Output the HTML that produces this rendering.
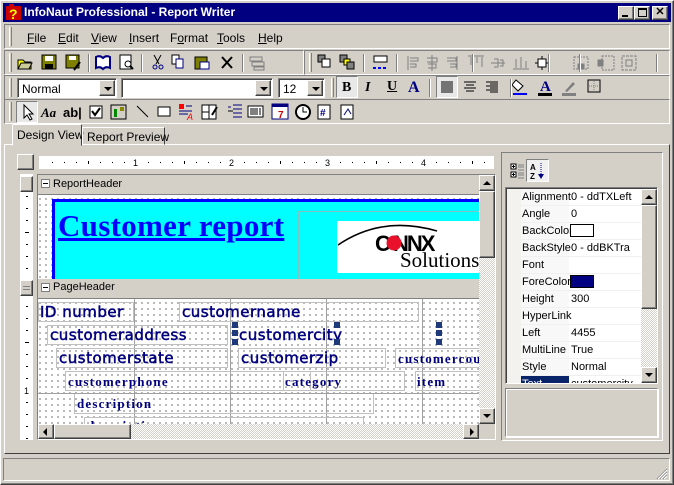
<!DOCTYPE html>
<html><head><meta charset="utf-8"><style>
*{box-sizing:border-box;margin:0;padding:0}
body{width:674px;height:485px;background:#d4d0c8;font-family:"Liberation Sans",sans-serif;font-size:11px;position:relative;overflow:hidden}
.a{position:absolute;white-space:nowrap}
.out{border:1px solid;border-color:#fff #404040 #404040 #fff;box-shadow:inset -1px -1px #808080}
.in{border:1px solid;border-color:#808080 #fff #fff #808080;box-shadow:inset 1px 1px #404040}
.etch{border:1px solid;border-color:#808080 #fff #fff #808080}
.grip{position:absolute;width:3px;border-left:1px solid #fff;border-right:1px solid #808080}
.sep{position:absolute;width:2px;border-left:1px solid #808080;border-right:1px solid #fff}
.mi{position:absolute;top:31px;font-size:12px}
.mi u{text-decoration:underline}
.combo{position:absolute;background:#fff;height:20px}
.cb{position:absolute;right:1px;top:1px;width:16px;height:16px;background:#d4d0c8}
.cb:after{content:"";position:absolute;left:4px;top:6px;border:4px solid transparent;border-top:4px solid #000;border-bottom:0}
.dots{background-color:#fff;background-image:radial-gradient(circle,#000 0.6px,transparent 0.8px);background-size:6px 6px;background-position:-1px 1px}
.fld{position:absolute;border:1px solid #c0c0c0;color:#00007f;white-space:nowrap;overflow:hidden}
.sa{font-family:"DejaVu Sans",sans-serif;font-size:15px;letter-spacing:0.5px;-webkit-text-stroke:0.5px #00007f}
.se{font-family:"Liberation Serif",serif;font-weight:bold;font-size:13px;letter-spacing:1.2px}
.row{position:absolute;left:0;width:136px;height:17px;border-bottom:1px solid #f0f0f0}
.row span{position:absolute;top:2px;white-space:nowrap}
.hs{position:absolute;width:6px;height:6px;background:#1f3a7a}
</style></head><body>
<div class="a out" style="left:0;top:0;width:674px;height:485px"></div>
<div class="a" style="left:3px;top:3px;width:668px;height:19px;background:#000080"></div>
<svg class="a" style="left:5px;top:4px" width="18" height="17"><rect x="1" y="2" width="15" height="14" fill="#c00"/><rect x="4" y="0" width="5" height="4" fill="#c00"/><text x="4" y="15" font-family="Liberation Sans" font-weight="bold" font-size="14" fill="#ff0">?</text></svg>
<div class="a" style="left:24px;top:5px;color:#fff;font-weight:bold;font-size:12px">InfoNaut Professional - Report Writer</div>
<div class="a out" style="left:618px;top:6px;width:16px;height:14px;background:#d4d0c8"><div class="a" style="left:3px;top:8px;width:6px;height:2px;background:#000"></div></div>
<div class="a out" style="left:634px;top:6px;width:16px;height:14px;background:#d4d0c8"><div class="a" style="left:3px;top:1px;width:9px;height:9px;border:1px solid #000;border-top-width:2px"></div></div>
<div class="a out" style="left:652px;top:6px;width:16px;height:14px;background:#d4d0c8;font-weight:bold;font-size:11px;text-align:center;line-height:11px">✕</div>
<div class="a etch" style="left:4px;top:24px;width:666px;height:25px"></div>
<div class="grip" style="left:9px;top:27px;height:19px"></div>
<div class="mi" style="left:27px"><u>F</u>ile</div>
<div class="mi" style="left:58px"><u>E</u>dit</div>
<div class="mi" style="left:91px"><u>V</u>iew</div>
<div class="mi" style="left:129px"><u>I</u>nsert</div>
<div class="mi" style="left:170px">F<u>o</u>rmat</div>
<div class="mi" style="left:217px"><u>T</u>ools</div>
<div class="mi" style="left:258px"><u>H</u>elp</div>
<div class="a etch" style="left:4px;top:50px;width:300px;height:25px"></div>
<div class="a etch" style="left:304px;top:50px;width:366px;height:25px"></div>
<div class="a etch" style="left:4px;top:75px;width:666px;height:25px"></div>
<div class="a etch" style="left:4px;top:99px;width:666px;height:25px"></div>
<div class="grip" style="left:9px;top:53px;height:19px"></div>
<div class="grip" style="left:309px;top:53px;height:19px"></div>
<div class="grip" style="left:9px;top:78px;height:19px"></div>
<div class="grip" style="left:331px;top:78px;height:19px"></div>
<div class="grip" style="left:9px;top:102px;height:19px"></div>
<svg class="a" style="left:16px;top:53px" width="300" height="20">
<path d="M2 7h5l2 2h6v7H2z" fill="#ff0" stroke="#000"/><path d="M2 16l3-6h11l-3 6z" fill="#cc9" stroke="#000"/>
<rect x="26" y="2" width="14" height="14" fill="#808000" stroke="#000"/><rect x="29" y="3" width="8" height="5" fill="#fff"/><rect x="29" y="11" width="8" height="5" fill="#000"/>
<rect x="50" y="2" width="13" height="13" fill="#808000" stroke="#000"/><rect x="53" y="3" width="7" height="4" fill="#fff"/><path d="M58 17l6-8" stroke="#000" stroke-width="2"/>
<path d="M80 4q4-2 7 1q3-3 7-1v11q-4-2-7 1q-3-3-7-1z" fill="#fff" stroke="#000080" stroke-width="2"/>
<rect x="104" y="2" width="11" height="14" fill="#fff" stroke="#000"/><circle cx="112" cy="11" r="3" fill="none" stroke="#000"/><path d="M114 13l3 3" stroke="#000" stroke-width="2"/>
<path d="M138 2l5 9M145 2l-5 9" stroke="#000"/><circle cx="139" cy="14" r="2" fill="none" stroke="#000080"/><circle cx="145" cy="14" r="2" fill="none" stroke="#000080"/>
<rect x="156" y="2" width="7" height="9" fill="#fff" stroke="#000"/><rect x="160" y="6" width="7" height="9" fill="#fff" stroke="#000080"/>
<rect x="179" y="4" width="12" height="12" fill="#808000" stroke="#000"/><rect x="184" y="9" width="9" height="7" fill="#fff" stroke="#000080"/>
<path d="M206 4l10 11M216 4l-10 11" stroke="#000" stroke-width="2"/>
<rect x="234" y="4" width="12" height="4" fill="none" stroke="#808080"/><rect x="236" y="9" width="12" height="4" fill="none" stroke="#808080"/><rect x="238" y="14" width="10" height="3" fill="none" stroke="#808080"/>
</svg>
<div class="sep" style="left:88px;top:54px;height:18px"></div>
<div class="sep" style="left:141px;top:54px;height:18px"></div>
<div class="sep" style="left:242px;top:54px;height:18px"></div>
<svg class="a" style="left:316px;top:53px" width="350" height="20">
<rect x="2" y="2" width="7" height="7" fill="#808080" stroke="#000"/><rect x="6" y="6" width="8" height="8" fill="#fff" stroke="#000"/>
<rect x="24" y="2" width="7" height="7" fill="#808080" stroke="#000"/><rect x="28" y="6" width="6" height="6" fill="#ff0" stroke="#000"/><rect x="31" y="9" width="7" height="7" fill="#808080" stroke="#000"/>
<rect x="58" y="3" width="13" height="6" fill="#fff" stroke="#000"/><path d="M57 15h15" stroke="#00f" stroke-dasharray="3 2" stroke-width="2"/>
<g stroke="#808080" fill="none"><path d="M92 3v14M94 5h8v3h-8M94 11h6v3h-6"/><path d="M116 2v16M111 5h10v4h-10M112 11h8v4h-8"/><path d="M141 3v14M131 5h9v3h-9M134 11h6v3h-6"/>
<path d="M152 3h16M155 4v8M161 4v6M166 4v10"/><path d="M175 10h14M178 6h4v8h-4M184 7h3v6h-3"/><path d="M197 16h16M200 6v9M205 4v11M210 8v7"/>
<path d="M226 3v14M219 10h14" stroke="#000"/><rect x="222" y="6" width="8" height="8" stroke="#000" fill="#fff"/>
<rect x="258" y="4" width="14" height="12" stroke-dasharray="2 1"/><rect x="262" y="11" width="6" height="5" fill="#808080"/>
<rect x="286" y="3" width="12" height="14" stroke-dasharray="2 1"/><rect x="282" y="7" width="5" height="6" fill="#808080"/>
<rect x="306" y="3" width="14" height="14" stroke-dasharray="3 1"/><rect x="310" y="7" width="6" height="6"/></g>
</svg>
<div class="sep" style="left:363px;top:54px;height:18px"></div>
<div class="sep" style="left:396px;top:54px;height:18px"></div>
<div class="sep" style="left:472px;top:54px;height:18px"></div>
<div class="sep" style="left:548px;top:54px;height:18px"></div>
<div class="sep" style="left:579px;top:54px;height:18px"></div>
<div class="sep" style="left:656px;top:54px;height:18px"></div>
<div class="combo in" style="left:17px;top:78px;width:100px;font-size:12px;padding:3px 0 0 4px">Normal<div class="cb out"></div></div>
<div class="combo in" style="left:121px;top:78px;width:152px"><div class="cb out"></div></div>
<div class="combo in" style="left:278px;top:78px;width:47px;font-size:12px;padding:3px 0 0 4px">12<div class="cb out"></div></div>
<div class="a in" style="left:336px;top:76px;width:22px;height:22px;background:#e8e8e8;box-shadow:none"></div>
<div class="a" style="left:342px;top:80px;font-family:'Liberation Serif';font-weight:bold;font-size:14px">B</div>
<div class="a" style="left:365px;top:80px;font-family:'Liberation Serif';font-style:italic;font-weight:bold;font-size:14px">I</div>
<div class="a" style="left:387px;top:79px;font-family:'Liberation Serif';font-weight:bold;font-size:14px;text-decoration:underline">U</div>
<div class="a" style="left:408px;top:79px;font-family:'Liberation Serif';font-weight:bold;font-size:16px;color:#000080">A</div>
<div class="a in" style="left:436px;top:76px;width:22px;height:22px;background:#e8e8e8;box-shadow:none"></div>
<svg class="a" style="left:436px;top:76px" width="230" height="22">
<g stroke="#000"><path d="M5 6h12M5 8h12M5 10h12M5 12h12M5 14h12M5 16h12"/><path d="M28 6h12M30 9h8M28 12h12M30 15h8"/><path d="M50 6h12M54 8h8M50 10h12M54 12h8M50 14h12M54 16h8"/></g>
<path d="M80 4l7 6-5 5-6-6z" fill="#fff" stroke="#000"/><rect x="77" y="17" width="14" height="2" fill="#00f"/>
<text x="104" y="15" font-family="Liberation Serif" font-weight="bold" font-size="15" fill="#000080">A</text><rect x="102" y="17" width="14" height="3" fill="#000"/>
<path d="M126 17h14v3h-14zM129 15l8-9 2 2-8 8z" fill="#808080"/>
<rect x="152" y="4" width="12" height="12" fill="none" stroke="#000"/><path d="M158 5v10M153 10h10" stroke="#808080" stroke-dasharray="1 1"/>
</svg>
<div class="sep" style="left:429px;top:79px;height:18px"></div>
<div class="sep" style="left:510px;top:79px;height:18px"></div>
<div class="a in" style="left:16px;top:101px;width:22px;height:22px;background:#e8e8e8;box-shadow:none"></div>
<svg class="a" style="left:16px;top:101px" width="350" height="22">
<path d="M8 4v13l3-3 3 5 2-1-3-5h4z" fill="#fff" stroke="#000"/>
<text x="25" y="16" font-family="Liberation Serif" font-style="italic" font-weight="bold" font-size="13">Aa</text>
<text x="47" y="16" font-family="Liberation Sans" font-weight="bold" font-size="13">ab|</text>
<rect x="74" y="5" width="12" height="12" fill="#fff" stroke="#000"/><path d="M76 10l3 4 5-7" stroke="#000" stroke-width="2" fill="none"/>
<rect x="95" y="4" width="15" height="14" fill="#d4d0c8" stroke="#000"/><path d="M98 16v-8h3v8" fill="#080"/><rect x="104" y="6" width="4" height="4" fill="#880"/>
<path d="M121 5l11 11" stroke="#000"/>
<rect x="142" y="6" width="12" height="9" fill="#fff" stroke="#000"/>
<rect x="163" y="3" width="5" height="5" fill="#f00"/><path d="M170 5h6M163 10h13M163 13h9" stroke="#000080"/><text x="171" y="19" font-size="9" fill="#f00" font-style="italic">A</text>
<rect x="186" y="4" width="14" height="14" fill="#fff" stroke="#000"/><path d="M193 4v14M186 11h7" stroke="#000"/><path d="M196 14l5-8" stroke="#000" stroke-width="2"/>
<path d="M212 6h3M212 10h3M217 4h9M217 8h9M217 12h9M217 16h9" stroke="#000080"/><path d="M212 10h5" stroke="#000"/>
<rect x="232" y="5" width="15" height="11" fill="#fff" stroke="#000"/><path d="M235 7v7M237 7v7M239 7v7M241 7v7M244 7v7" stroke="#000"/>
<rect x="256" y="3" width="16" height="15" fill="#fff" stroke="#000080"/><rect x="256" y="3" width="16" height="3" fill="#000080"/><text x="262" y="17" font-size="10" fill="#c00" font-weight="bold">7</text>
<circle cx="287" cy="11" r="7" fill="#fff" stroke="#000" stroke-width="2"/><path d="M287 6v5h4" stroke="#000" fill="none"/>
<rect x="302" y="4" width="12" height="14" fill="#fff" stroke="#000"/><text x="304" y="15" font-size="10" fill="#000080" font-weight="bold">#</text>
<rect x="325" y="4" width="12" height="14" fill="#fff" stroke="#000"/><path d="M328 14l4-6 3 5" stroke="#000080" fill="none"/>
</svg>
<div class="a" style="left:4px;top:144px;width:666px;height:310px;border:1px solid;border-color:#fff #404040 #404040 #fff"></div>
<div class="a" style="left:12px;top:124px;width:70px;height:22px;background:#d4d0c8;border:1px solid;border-color:#fff #404040 transparent #fff;border-radius:2px 2px 0 0;font-size:12px;padding:3px 0 0 4px">Design View</div>
<div class="a" style="left:82px;top:127px;width:83px;height:18px;border:1px solid;border-color:#fff #404040 transparent #fff;font-size:12px;padding:2px 0 0 4px">Report Preview</div>
<div class="a out" style="left:17px;top:154px;width:17px;height:16px;background:#d4d0c8"></div>
<div class="a" style="left:39px;top:156px;width:455px;height:13px;background:#fff"></div>
<svg class="a" style="left:39px;top:156px" width="455" height="13" font-family="Liberation Sans" font-size="9">
<g fill="#000"><rect x="13" y="6" width="1" height="1"/><rect x="25" y="6" width="1" height="1"/><rect x="37" y="6" width="1" height="1"/><rect x="49" y="5" width="1" height="3"/><rect x="61" y="6" width="1" height="1"/><rect x="73" y="6" width="1" height="1"/><rect x="85" y="6" width="1" height="1"/>
<rect x="109" y="6" width="1" height="1"/><rect x="121" y="6" width="1" height="1"/><rect x="133" y="6" width="1" height="1"/><rect x="145" y="5" width="1" height="3"/><rect x="157" y="6" width="1" height="1"/><rect x="169" y="6" width="1" height="1"/><rect x="181" y="6" width="1" height="1"/>
<rect x="205" y="6" width="1" height="1"/><rect x="217" y="6" width="1" height="1"/><rect x="229" y="6" width="1" height="1"/><rect x="241" y="5" width="1" height="3"/><rect x="253" y="6" width="1" height="1"/><rect x="265" y="6" width="1" height="1"/><rect x="277" y="6" width="1" height="1"/>
<rect x="301" y="6" width="1" height="1"/><rect x="313" y="6" width="1" height="1"/><rect x="325" y="6" width="1" height="1"/><rect x="337" y="5" width="1" height="3"/><rect x="349" y="6" width="1" height="1"/><rect x="361" y="6" width="1" height="1"/><rect x="373" y="6" width="1" height="1"/>
<rect x="397" y="6" width="1" height="1"/><rect x="409" y="6" width="1" height="1"/><rect x="421" y="6" width="1" height="1"/><rect x="433" y="5" width="1" height="3"/><rect x="445" y="6" width="1" height="1"/></g>
<text x="94" y="10">1</text><text x="190" y="10">2</text><text x="286" y="10">3</text><text x="382" y="10">4</text></svg>
<div class="a" style="left:20px;top:174px;width:13px;height:266px;background:#fff"></div>
<div class="a out" style="left:20px;top:176px;width:13px;height:16px;background:#d4d0c8"></div>
<div class="a out" style="left:20px;top:280px;width:13px;height:16px;background:#d4d0c8"><div class="a" style="left:2px;top:5px;width:7px;height:4px;border-top:1px solid #808080;border-bottom:1px solid #808080"></div></div>
<svg class="a" style="left:20px;top:196px" width="13" height="244" font-family="Liberation Sans" font-size="9"><g fill="#000">
<rect x="6" y="0" width="2" height="1"/><rect x="6" y="12" width="2" height="1"/><rect x="6" y="24" width="2" height="1"/><rect x="5" y="36" width="4" height="1"/><rect x="6" y="48" width="2" height="1"/><rect x="6" y="60" width="2" height="1"/><rect x="6" y="72" width="2" height="1"/>
<rect x="6" y="110" width="2" height="1"/><rect x="6" y="122" width="2" height="1"/><rect x="6" y="134" width="2" height="1"/><rect x="5" y="146" width="4" height="1"/><rect x="6" y="158" width="2" height="1"/><rect x="6" y="170" width="2" height="1"/><rect x="6" y="182" width="2" height="1"/><rect x="6" y="206" width="2" height="1"/><rect x="6" y="218" width="2" height="1"/><rect x="6" y="230" width="2" height="1"/><rect x="6" y="242" width="2" height="1"/></g>
<text x="4" y="198">1</text></svg>
<div class="a in" style="left:37px;top:174px;width:459px;height:266px;background:#d4d0c8"></div>
<div class="a" style="left:38px;top:175px;width:441px;height:20px;background:#d4d0c8;border-bottom:1px solid #808080"></div>
<div class="a" style="left:41px;top:179px;width:9px;height:9px;border:1px solid #808080;background:#fff"><div class="a" style="left:1px;top:3px;width:5px;height:1px;background:#000"></div></div>
<div class="a" style="left:53px;top:178px;font-size:11px">ReportHeader</div>
<div class="a dots" style="left:38px;top:195px;width:441px;height:84px"></div>
<div class="a" style="left:52px;top:199px;width:427px;height:80px;background:#0ff;border-left:3px solid #00f;border-top:3px solid #00f"></div>
<div class="a" style="left:298px;top:211px;width:181px;height:68px;border-left:1px solid #80c0c0;border-top:1px solid #80c0c0"></div>
<div class="a" style="left:58px;top:208px;font-family:'Liberation Serif',serif;font-weight:bold;font-size:31px;color:#00f;text-decoration:underline;letter-spacing:0.3px">Customer report</div>
<div class="a" style="left:337px;top:221px;width:142px;height:52px;background:#fff;overflow:hidden">
<svg width="142" height="52"><path d="M1 24Q45 -6 100 10" stroke="#000" fill="none" stroke-width="1.5"/>
<text x="38" y="30" font-family="Liberation Sans" font-weight="bold" font-size="22" letter-spacing="-2">C  NNX</text><circle cx="57" cy="22" r="7.5" fill="#e8102a"/>
<text x="63" y="46" font-family="Liberation Serif" font-size="21">Solutions</text></svg></div>
<div class="a" style="left:38px;top:279px;width:441px;height:20px;background:#d4d0c8;border-bottom:1px solid #808080"></div>
<div class="a" style="left:41px;top:283px;width:9px;height:9px;border:1px solid #808080;background:#fff"><div class="a" style="left:1px;top:3px;width:5px;height:1px;background:#000"></div></div>
<div class="a" style="left:53px;top:281px;font-size:11px">PageHeader</div>
<div class="a dots" style="left:38px;top:299px;width:441px;height:125px;overflow:hidden">
<div class="a" style="left:96px;top:0;width:1px;height:125px;background:#a0a0a0"></div>
<div class="a" style="left:192px;top:0;width:1px;height:125px;background:#a0a0a0"></div>
<div class="a" style="left:288px;top:0;width:1px;height:125px;background:#a0a0a0"></div>
<div class="a" style="left:384px;top:0;width:1px;height:125px;background:#a0a0a0"></div>
<div class="a" style="left:0;top:94px;width:441px;height:1px;background:#a0a0a0"></div>
<div class="fld sa" style="left:0;top:3px;width:96px;height:20px;padding-left:1px">ID number</div>
<div class="fld sa" style="left:141px;top:3px;width:240px;height:20px;padding-left:2px">customername</div>
<div class="fld sa" style="left:9px;top:26px;width:181px;height:20px;padding-left:2px">customeraddress</div>
<div class="fld sa" style="left:198px;top:26px;width:200px;height:20px;padding-left:2px;border-color:transparent">customercity</div>
<div class="fld sa" style="left:18px;top:49px;width:172px;height:20px;padding-left:2px">customerstate</div>
<div class="fld sa" style="left:200px;top:49px;width:148px;height:20px;padding-left:2px">customerzip</div>
<div class="fld se" style="left:357px;top:49px;width:90px;height:20px;padding:2px 0 0 2px">customercountry</div>
<div class="fld se" style="left:27px;top:72px;width:246px;height:20px;padding:2px 0 0 2px">customerphone</div>
<div class="fld se" style="left:245px;top:72px;width:122px;height:20px;padding:2px 0 0 1px">category</div>
<div class="fld se" style="left:377px;top:72px;width:70px;height:20px;padding:2px 0 0 1px">item</div>
<div class="fld se" style="left:36px;top:95px;width:300px;height:20px;padding:2px 0 0 2px;border-top:0">description</div>
<div class="fld se" style="left:46px;top:118px;width:280px;height:20px;padding:0 0 0 2px">description</div>
</div>
<div class="hs" style="left:232px;top:322px"></div><div class="hs" style="left:334px;top:322px"></div><div class="hs" style="left:436px;top:322px"></div>
<div class="hs" style="left:232px;top:330px"></div><div class="hs" style="left:436px;top:330px"></div>
<div class="hs" style="left:232px;top:339px"></div><div class="hs" style="left:334px;top:339px"></div><div class="hs" style="left:436px;top:339px"></div>
<div class="a" style="left:479px;top:175px;width:16px;height:249px;background-image:repeating-conic-gradient(#d4d0c8 0 25%,#fff 0 50%);background-size:2px 2px"></div>
<div class="a out" style="left:479px;top:175px;width:16px;height:16px;background:#d4d0c8"><div class="a" style="left:3px;top:5px;border:4px solid transparent;border-bottom:4px solid #000;border-top:0"></div></div>
<div class="a out" style="left:479px;top:191px;width:16px;height:67px;background:#d4d0c8"></div>
<div class="a out" style="left:479px;top:408px;width:16px;height:16px;background:#d4d0c8"><div class="a" style="left:3px;top:5px;border:4px solid transparent;border-top:4px solid #000;border-bottom:0"></div></div>
<div class="a" style="left:38px;top:424px;width:441px;height:15px;background-image:repeating-conic-gradient(#d4d0c8 0 25%,#fff 0 50%);background-size:2px 2px"></div>
<div class="a out" style="left:38px;top:424px;width:16px;height:15px;background:#d4d0c8"><div class="a" style="left:4px;top:3px;border:4px solid transparent;border-right:4px solid #000;border-left:0"></div></div>
<div class="a out" style="left:54px;top:424px;width:77px;height:15px;background:#d4d0c8"></div>
<div class="a out" style="left:463px;top:424px;width:16px;height:15px;background:#d4d0c8"><div class="a" style="left:6px;top:3px;border:4px solid transparent;border-left:4px solid #000;border-right:0"></div></div>
<div class="a" style="left:479px;top:424px;width:16px;height:15px;background:#d4d0c8"></div>
<div class="a etch" style="left:501px;top:152px;width:162px;height:289px"></div>
<svg class="a" style="left:509px;top:160px" width="40" height="22">
<g fill="none" stroke="#000"><rect x="2" y="4" width="5" height="5" fill="#fff"/><rect x="2" y="12" width="5" height="5" fill="#fff"/></g><path d="M3 6.5h3M4.5 5v3M3 14.5h3M4.5 13v3" stroke="#000"/><path d="M9 5h6M9 7h6M9 10h6M9 13h6M9 15h6M9 18h6" stroke="#808080"/>
</svg>
<div class="a in" style="left:526px;top:159px;width:23px;height:23px;background:#f0f0f0;box-shadow:none"></div>
<svg class="a" style="left:529px;top:161px" width="20" height="20"><text x="1" y="9" font-size="8" font-family="Liberation Sans" font-weight="bold">A</text><text x="1" y="18" font-size="8" font-family="Liberation Sans" font-weight="bold">Z</text><path d="M12 2v14" stroke="#000080" stroke-dasharray="1 1"/><path d="M9 13l3 5 3-5z" fill="#000080"/></svg>
<div class="a in" style="left:505px;top:187px;width:153px;height:197px;background:#fff;overflow:hidden">
<div class="a" style="left:1px;top:1px;width:14px;height:196px;background:#f4f2ee"></div>
<div class="a" style="left:15px;top:1px;width:48px;height:196px;background:#f8f8f8"></div>
<div style="position:absolute;left:15px;top:1px;width:120px;font-size:11px">
<div class="row" style="top:0"><span style="left:1px">Alignment</span><span style="left:50px">0 - ddTXLeft</span></div>
<div class="row" style="top:17px"><span style="left:1px">Angle</span><span style="left:50px">0</span></div>
<div class="row" style="top:34px"><span style="left:1px">BackColor</span><span style="left:49px;top:1px;width:24px;height:13px;border:1px solid #000;background:#fff"></span></div>
<div class="row" style="top:51px"><span style="left:1px">BackStyle</span><span style="left:50px">0 - ddBKTra</span></div>
<div class="row" style="top:68px"><span style="left:1px">Font</span></div>
<div class="row" style="top:85px"><span style="left:1px">ForeColor</span><span style="left:49px;top:1px;width:24px;height:13px;border:1px solid #000;background:#000080"></span></div>
<div class="row" style="top:102px"><span style="left:1px">Height</span><span style="left:50px">300</span></div>
<div class="row" style="top:119px"><span style="left:1px">HyperLink</span></div>
<div class="row" style="top:136px"><span style="left:1px">Left</span><span style="left:50px">4455</span></div>
<div class="row" style="top:153px"><span style="left:1px">MultiLine</span><span style="left:50px">True</span></div>
<div class="row" style="top:170px"><span style="left:1px">Style</span><span style="left:50px">Normal</span></div>
<div class="row" style="top:187px"><span style="left:0;top:0;width:48px;height:17px;background:#0a246a;color:#fff;padding:2px 0 0 1px">Text</span><span style="left:50px">customercity</span></div>
</div>
<div class="a" style="left:135px;top:1px;width:16px;height:194px;background-image:repeating-conic-gradient(#d4d0c8 0 25%,#fff 0 50%);background-size:2px 2px"></div>
<div class="a out" style="left:135px;top:1px;width:16px;height:16px;background:#d4d0c8"><div class="a" style="left:3px;top:5px;border:4px solid transparent;border-bottom:4px solid #000;border-top:0"></div></div>
<div class="a out" style="left:135px;top:17px;width:16px;height:104px;background:#d4d0c8"></div>
<div class="a out" style="left:135px;top:179px;width:16px;height:16px;background:#d4d0c8"><div class="a" style="left:3px;top:5px;border:4px solid transparent;border-top:4px solid #000;border-bottom:0"></div></div>
</div>
<div class="a" style="left:505px;top:388px;width:153px;height:49px;border:1px solid;border-color:#808080 #fff #fff #808080;box-shadow:1px 1px 0 #fff,inset 1px 1px #fff"></div>
<div class="a" style="left:3px;top:458px;width:667px;height:23px;border:1px solid;border-color:#808080 #fff #fff #808080"></div>
<svg class="a" style="left:655px;top:467px" width="14" height="14"><path d="M12 2L2 12M12 5L5 12M12 8L8 12" stroke="#808080"/><path d="M12 3L3 12M12 6L6 12M12 9L9 12" stroke="#fff"/></svg>
</body></html>
